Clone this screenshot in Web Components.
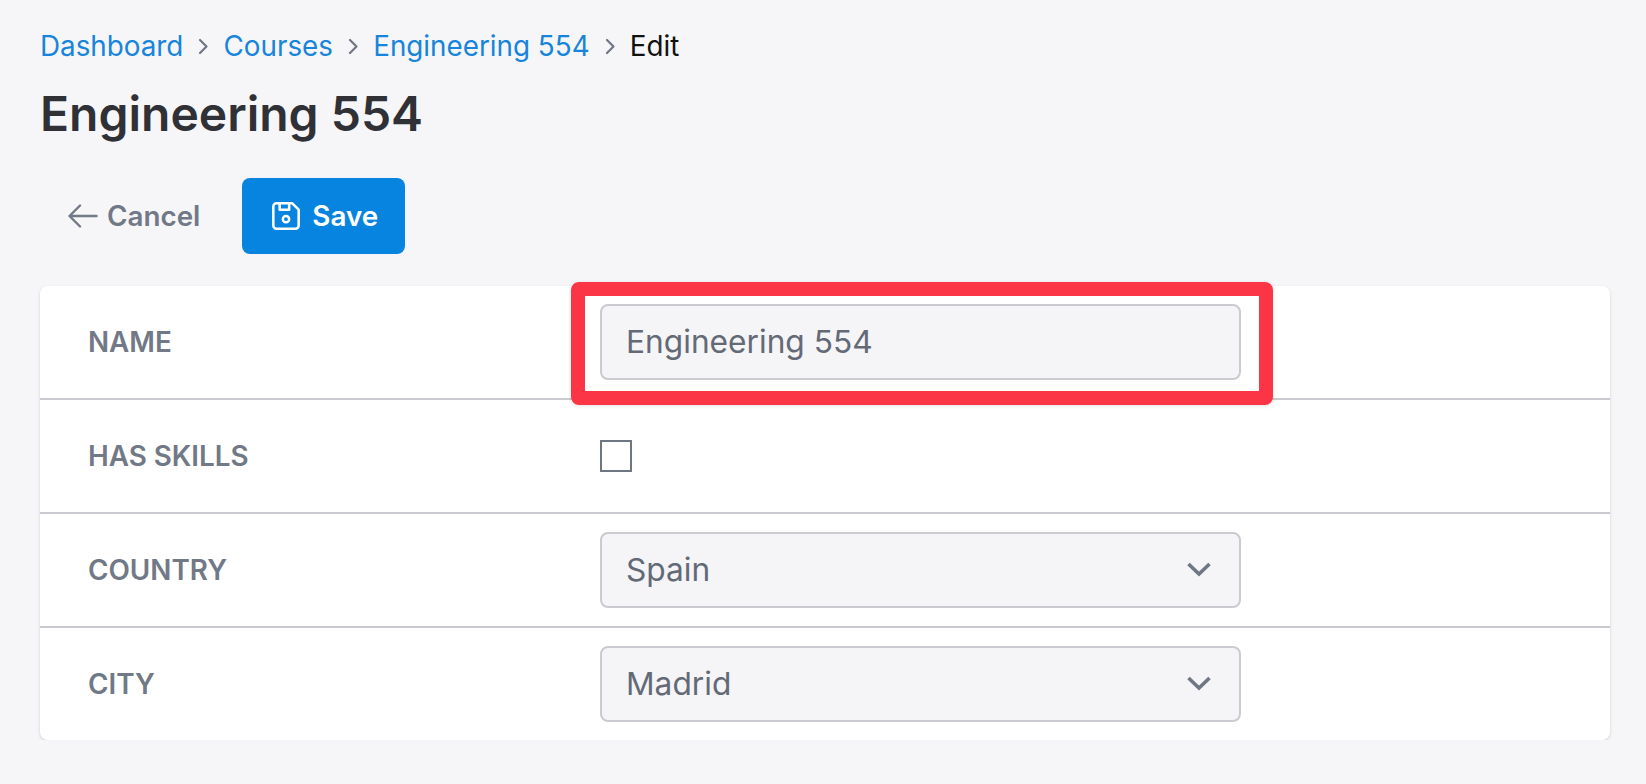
<!DOCTYPE html>
<html><head><meta charset="utf-8">
<style>
html,body{margin:0;background:#f6f6f9;}
body{font-family:Inter,"Liberation Sans",sans-serif;}
edit-page{display:block}
</style></head><body>
<edit-page></edit-page>
<script>
const chev='<svg class="sep" viewBox="0 0 28 28" fill="none" stroke="currentColor" stroke-width="2.2" stroke-linecap="round" stroke-linejoin="round"><path d="M11 8l6.5 6.5L11 21"/></svg>';
class BreadCrumbs extends HTMLElement{constructor(){super();this.attachShadow({mode:'open'}).innerHTML=`<style>
:host{display:flex;align-items:center;gap:6.1px;font-size:27.8px;line-height:40px;color:#1685db}
.sep{width:28px;height:28px;color:#6f7684;flex:none}
.cur{color:#111}
</style><span>Dashboard</span>${chev}<span>Courses</span>${chev}<span>Engineering 554</span>${chev}<span class="cur">Edit</span>`}}
customElements.define('bread-crumbs',BreadCrumbs);
class PageTitle extends HTMLElement{constructor(){super();this.attachShadow({mode:'open'}).innerHTML=`<style>
:host{display:block;font-size:48px;line-height:56px;font-weight:600;color:#2f3136}</style><slot></slot>`}}
customElements.define('page-title',PageTitle);
class CancelLink extends HTMLElement{constructor(){super();this.attachShadow({mode:'open'}).innerHTML=`<style>
:host{display:inline-flex;align-items:center;gap:7px;height:76px;padding:0 42px 0 25px;font-size:27.8px;font-weight:600;color:#727986}
svg{width:35px;height:36px}</style>
<svg viewBox="0 0 23.3 24" fill="none" stroke="currentColor" stroke-width="1.6" stroke-linecap="round" stroke-linejoin="round"><path d="M10 19l-7-7m0 0l7-7m-7 7h18"/></svg><slot></slot>`}}
customElements.define('cancel-link',CancelLink);
class SaveButton extends HTMLElement{constructor(){super();this.attachShadow({mode:'open'}).innerHTML=`<style>
:host{display:inline-flex;align-items:center;gap:7px;height:76px;padding:0 27px 0 25px;box-sizing:border-box;border-radius:8px;background:#0784e0;font-size:27.8px;font-weight:600;color:#fff}
svg{width:38px;height:38px}</style>
<svg viewBox="0 0 24 24" fill="none" stroke="currentColor" stroke-width="1.6" stroke-linecap="round" stroke-linejoin="round"><path d="M6 4h10l4 4v10a2 2 0 0 1-2 2H6a2 2 0 0 1-2-2V6a2 2 0 0 1 2-2"/><circle cx="12" cy="14" r="2"/><path d="M14 4v4H8V4"/></svg><slot></slot>`}}
customElements.define('save-button',SaveButton);
class FormRow extends HTMLElement{constructor(){super();this.attachShadow({mode:'open'}).innerHTML=`<style>
:host{display:grid;grid-template-columns:512px 641px;align-items:center;padding:18px 0 18.5px 48px;border-bottom:2px solid #c9cbd0}
:host([last]){border-bottom:0}
.lab{font-size:27.8px;font-weight:600;color:#727986;text-transform:uppercase}
</style><div class="lab"><slot name="label"></slot></div><div><slot></slot></div>`}}
customElements.define('form-row',FormRow);
class TextField extends HTMLElement{constructor(){super();this.attachShadow({mode:'open'}).innerHTML=`<style>
:host{display:flex;align-items:center;justify-content:space-between;position:relative;box-sizing:border-box;height:75.5px;padding:0 28px 0 24px;background:#f5f5f8;border:2px solid #c9cbd0;border-radius:8px;font-size:31.7px;color:#636a76}
#x{display:flex}
svg{width:24px;height:15px;color:#6f7684}
.hl{position:absolute;left:-31.5px;right:-34px;top:-24px;bottom:-27px;border:14px solid #fb3545;border-radius:8px;box-shadow:0 1px 4px rgba(0,0,0,.12)}
</style><span><slot></slot></span><span id="x"></span>`;
if(this.hasAttribute('select'))this.shadowRoot.getElementById('x').innerHTML='<svg viewBox="0 0 24 15" fill="none" stroke="currentColor" stroke-width="3.6"><path d="M1.5 2l10.5 10L22.5 2"/></svg>';
if(this.hasAttribute('highlight'))this.shadowRoot.getElementById('x').className='hl';}}
customElements.define('text-field',TextField);
class CheckBox extends HTMLElement{constructor(){super();this.attachShadow({mode:'open'}).innerHTML=`<style>
:host{display:block;width:32px;height:32px;margin:21.75px 0;box-sizing:border-box;border:2px solid #6f7684}</style>`}}
customElements.define('check-box',CheckBox);
class FormCard extends HTMLElement{constructor(){super();this.attachShadow({mode:'open'}).innerHTML=`<style>
:host{display:block;background:#fff;border-radius:8px;box-shadow:0 1px 3px rgba(0,0,0,.1),0 2px 4px rgba(0,0,0,.06)}</style><slot></slot>`}}
customElements.define('form-card',FormCard);
class EditPage extends HTMLElement{constructor(){super();this.attachShadow({mode:'open'}).innerHTML=`<style>
:host{display:block;padding:26px 36px 0 40px}
.title{margin:20px 0 0}
.acts{display:flex;align-items:center;margin:36px 0 32px}
</style>
<bread-crumbs></bread-crumbs>
<page-title class="title">Engineering 554</page-title>
<div class="acts"><cancel-link>Cancel</cancel-link><save-button>Save</save-button></div>
<form-card>
 <form-row><span slot="label">Name</span><text-field highlight>Engineering 554</text-field></form-row>
 <form-row><span slot="label">Has skills</span><check-box></check-box></form-row>
 <form-row><span slot="label">Country</span><text-field select>Spain</text-field></form-row>
 <form-row last><span slot="label">City</span><text-field select>Madrid</text-field></form-row>
</form-card>`}}
customElements.define('edit-page',EditPage);
</script>
</body></html>
